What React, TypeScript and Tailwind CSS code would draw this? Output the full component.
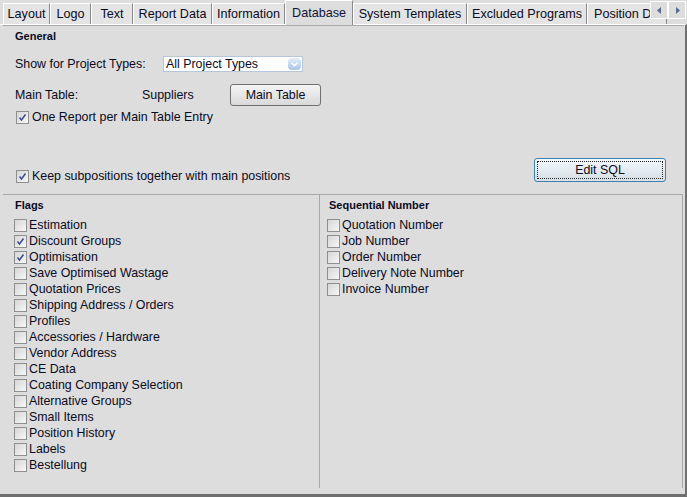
import React from 'react';

const tabs = [
  { label: 'Layout', w: 47 },
  { label: 'Logo', w: 41 },
  { label: 'Text', w: 42 },
  { label: 'Report Data', w: 79 },
  { label: 'Information', w: 73 },
  { label: 'Database', w: 68, active: true },
  { label: 'System Templates', w: 114 },
  { label: 'Excluded Programs', w: 120 },
  { label: 'Position Data', w: 80 },
];

const flags = [
  { label: 'Estimation', checked: false },
  { label: 'Discount Groups', checked: true },
  { label: 'Optimisation', checked: true },
  { label: 'Save Optimised Wastage', checked: false },
  { label: 'Quotation Prices', checked: false },
  { label: 'Shipping Address / Orders', checked: false },
  { label: 'Profiles', checked: false },
  { label: 'Accessories / Hardware', checked: false },
  { label: 'Vendor Address', checked: false },
  { label: 'CE Data', checked: false },
  { label: 'Coating Company Selection', checked: false },
  { label: 'Alternative Groups', checked: false },
  { label: 'Small Items', checked: false },
  { label: 'Position History', checked: false },
  { label: 'Labels', checked: false },
  { label: 'Bestellung', checked: false },
];

const numbers = ['Quotation Number', 'Job Number', 'Order Number', 'Delivery Note Number', 'Invoice Number'];

function Check({ checked }: { checked?: boolean }) {
  return (
    <span className="w-[13px] h-[13px] shrink-0 border border-[#8e8f8f] bg-gradient-to-br from-[#d6d6d6] to-[#f7f7f7] flex items-center justify-center">
      {checked && (
        <svg width="9" height="9" viewBox="0 0 9 9">
          <path d="M1.5 4.5 L3.5 7 L7.5 1.5" fill="none" stroke="#3d4f91" strokeWidth="1.6" />
        </svg>
      )}
    </span>
  );
}

function CheckRow({ label, checked }: { label: string; checked?: boolean }) {
  return (
    <div className="flex items-center h-[16px]">
      <Check checked={checked} />
      <span className="ml-[2px] leading-none whitespace-nowrap">{label}</span>
    </div>
  );
}

export default function App() {
  return (
    <div
      className="w-[687px] h-[497px] bg-[#dddddd] overflow-hidden flex flex-col text-[12.4px] text-[#0b0b1e]"
      style={{ fontFamily: '"Liberation Sans", Arial, sans-serif' }}
    >
      {/* tab strip */}
      <div className="h-[24px] flex items-end pl-[3px] relative">
        {tabs.map((t, i) =>
          t.active ? (
            <div
              key={t.label}
              style={{ width: t.w }}
              className="h-[25px] -mb-[1px] z-10 shrink-0 bg-[#dddddd] border-t border-l border-white border-r border-r-[#8a8a8a] flex items-center justify-center text-[12.6px] text-[#10143a]"
            >
              {t.label}
            </div>
          ) : (
            <div
              key={t.label}
              style={{ width: t.w }}
              className={
                i === tabs.length - 1
                  ? 'h-[21px] shrink-0 bg-[#e4e4e4] border-t border-l border-white border-r border-r-[#8a8a8a] flex items-center pl-[6px] whitespace-nowrap overflow-hidden text-[12.6px]'
                  : 'h-[21px] shrink-0 bg-[#e4e4e4] border-t border-l border-white border-r border-r-[#8a8a8a] flex items-center justify-center whitespace-nowrap text-[12.6px]'
              }
            >
              {t.label}
            </div>
          )
        )}
        <div className="absolute right-[1px] top-[1px] flex z-20">
          <div className="w-[18px] h-[18px] bg-[#dddddd] border border-white flex items-center justify-center">
            <svg width="5" height="7" viewBox="0 0 5 7">
              <path d="M4 0 L0 3.5 L4 7 Z" fill="#5a6a90" />
            </svg>
          </div>
          <div className="w-[18px] h-[18px] bg-[#dddddd] border border-white flex items-center justify-center">
            <svg width="5" height="7" viewBox="0 0 5 7">
              <path d="M1 0 L5 3.5 L1 7 Z" fill="#5a6a90" />
            </svg>
          </div>
        </div>
      </div>

      {/* panel */}
      <div className="flex-1 border-t border-white border-r-2 border-r-[#6f6f6f] border-b-[3px] border-b-[#6f6f6f] flex flex-col">
        <div className="flex-1 ml-[3px] mr-[1px] border-t border-[#a8a8a8] flex flex-col">
          {/* General */}
          <div className="px-[12px] flex flex-col">
            <div className="mt-[4px] h-[12px] flex items-center font-bold text-[11px]">General</div>
            <div className="mt-[14px] h-[16px] flex items-center">
              <span className="w-[148px]">Show for Project Types:</span>
              <div className="w-[140px] h-[16px] bg-white border border-[#b6c7db] flex items-center justify-between pl-[2px] pr-[1px]">
                <span>All Project Types</span>
                <span className="w-[13px] h-[12px] rounded-[4px] bg-gradient-to-b from-[#e4eefa] to-[#a9c4e4] flex items-center justify-center">
                  <svg width="7" height="5" viewBox="0 0 7 5">
                    <path d="M0.5 0.8 L3.5 3.8 L6.5 0.8" fill="none" stroke="#ffffff" strokeWidth="1.4" />
                  </svg>
                </span>
              </div>
            </div>
            <div className="mt-[12px] h-[22px] flex items-center">
              <span className="w-[127px]">Main Table:</span>
              <span className="w-[88px]">Suppliers</span>
              <button className="w-[91px] h-[22px] rounded-[3px] border border-[#707070] bg-gradient-to-b from-[#f4f4f4] to-[#d9d9d9] text-[12.4px] text-[#0b0b1e]">
                Main Table
              </button>
            </div>
            <div className="mt-[5px] h-[12px] flex items-center pl-[1px]">
              <Check checked />
              <span className="ml-[3px]">One Report per Main Table Entry</span>
            </div>
            <div className="mt-[35px] h-[24px] flex items-end justify-between pr-[6px]">
              <div className="flex items-center pl-[1px] h-[12px]">
                <Check checked />
                <span className="ml-[3px]">Keep subpositions together with main positions</span>
              </div>
              <button className="w-[132px] h-[24px] rounded-[3px] border border-[#3c7fb1] bg-gradient-to-b from-[#f2f8fc] to-[#d6dfe6] p-[2px] text-[12.4px] text-[#0b0b1e]">
                <span className="w-full h-full border border-dotted border-[#222] flex items-center justify-center">
                  Edit SQL
                </span>
              </button>
            </div>
          </div>

          {/* Flags / Sequential Number */}
          <div className="mt-[12px] h-[294px] mr-[1px] border-t border-[#a8a8a8] border-r border-r-[#a8a8a8] flex">
            <div className="w-[317px] border-r border-[#a8a8a8] pl-[11px] flex flex-col">
              <div className="mt-[4px] h-[12px] flex items-center font-bold text-[11px] pl-[1px]">Flags</div>
              <div className="mt-[6px] flex flex-col">
                {flags.map((f) => (
                  <CheckRow key={f.label} label={f.label} checked={f.checked} />
                ))}
              </div>
            </div>
            <div className="flex-1 pl-[7px] flex flex-col">
              <div className="mt-[4px] h-[12px] flex items-center font-bold text-[11px] pl-[2px]">Sequential Number</div>
              <div className="mt-[6px] flex flex-col">
                {numbers.map((n) => (
                  <CheckRow key={n} label={n} />
                ))}
              </div>
            </div>
          </div>
        </div>
      </div>
    </div>
  );
}
